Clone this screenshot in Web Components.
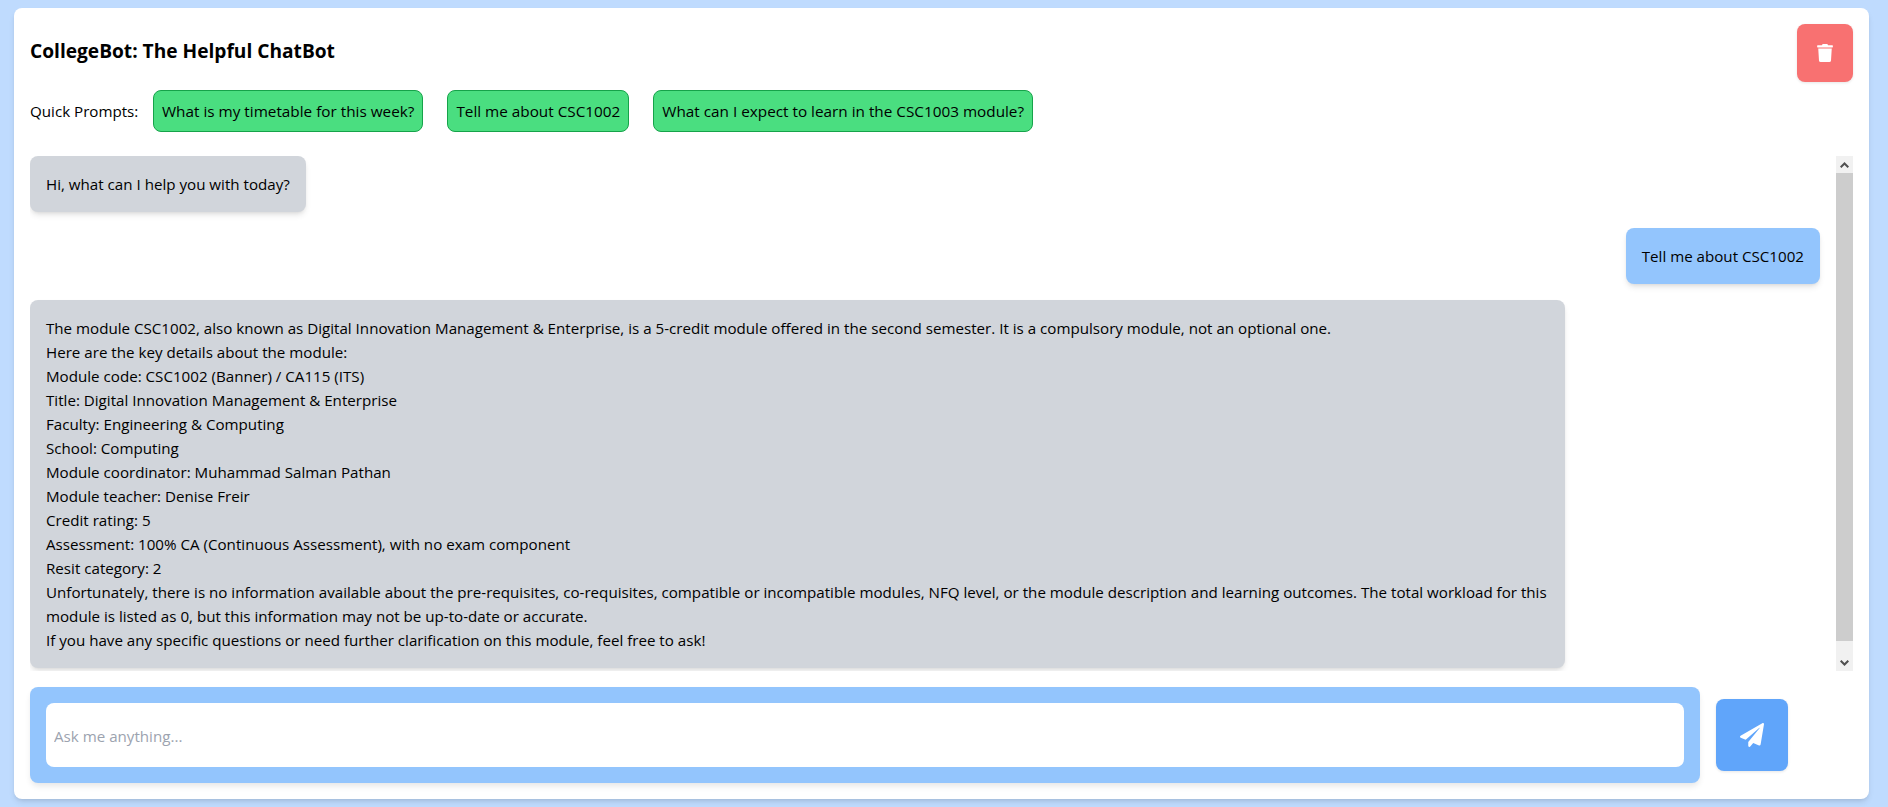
<!DOCTYPE html>
<html>
  <head>
    <meta charset="UTF-8" />
    <title>CollegeBot</title>
    <style>
      html, body { height: 100%; }
      body {
        margin: 0;
        background-color: #bfdbfe;
        font-family: "Open Sans", "Noto Sans", sans-serif;
        font-size: 15.15px;
        line-height: 24px;
        color: #000;
        overflow: hidden;
      }
    </style>
  </head>
  <body>
    <chat-app>
      <chat-header title-text="CollegeBot: The Helpful ChatBot"></chat-header>
      <prompt-row>
        <prompt-button>What is my timetable for this week?</prompt-button>
        <prompt-button>Tell me about CSC1002</prompt-button>
        <prompt-button>What can I expect to learn in the CSC1003 module?</prompt-button>
      </prompt-row>
      <chat-log>
        <chat-bubble>Hi, what can I help you with today?</chat-bubble>
        <chat-bubble from="user">Tell me about CSC1002</chat-bubble>
        <chat-bubble wide>The module CSC1002, also known as Digital Innovation Management &amp; Enterprise, is a 5-credit module offered in the second semester. It is a compulsory module, not an optional one.<br>Here are the key details about the module:<br>Module code: CSC1002 (Banner) / CA115 (ITS)<br>Title: Digital Innovation Management &amp; Enterprise<br>Faculty: Engineering &amp; Computing<br>School: Computing<br>Module coordinator: Muhammad Salman Pathan<br>Module teacher: Denise Freir<br>Credit rating: 5<br>Assessment: 100% CA (Continuous Assessment), with no exam component<br>Resit category: 2<br>Unfortunately, there is no information available about the pre-requisites, co-requisites, compatible or incompatible modules, NFQ level, or the module description and learning outcomes. The total workload for this<br>module is listed as 0, but this information may not be up-to-date or accurate.<br>If you have any specific questions or need further clarification on this module, feel free to ask!</chat-bubble>
      </chat-log>
      <chat-input></chat-input>
    </chat-app>

    <script>
      // Small helper, every element gets an open shadow root from a string
      const define = (name, html) => {
        const tpl = document.createElement("template");
        tpl.innerHTML = html;
        customElements.define(name, class extends HTMLElement {
          constructor() {
            super();
            this.attachShadow({ mode: "open" }).appendChild(tpl.content.cloneNode(true));
          }
        });
      };

      define("chat-app", `
        <style>
          :host {
            display: flex;
            flex-direction: column;
            box-sizing: border-box;
            width: 1855px;
            height: 791px;
            margin: 8px 0 0 14px;
            padding: 16px;
            background: #fff;
            border-radius: 8px;
            box-shadow: 0 4px 6px -1px rgba(0,0,0,.1), 0 2px 4px -2px rgba(0,0,0,.1);
          }
        </style>
        <slot></slot>
      `);

      class ChatHeader extends HTMLElement {
        constructor() {
          super();
          this.attachShadow({ mode: "open" }).innerHTML = `
            <style>
              :host { display: flex; justify-content: space-between; align-items: center; flex: none; }
              h1 { margin: 0 0 4px; font-size: 19.15px; line-height: 28px; font-weight: 700; }
              button {
                width: 56px; height: 58px; padding: 0; border: 0;
                display: flex; align-items: center; justify-content: center;
                background: #f87171; border-radius: 8px;
                box-shadow: 0 1px 3px rgba(0,0,0,.1);
              }
              svg { width: 16px; height: 18px; fill: #fff; display: block; }
            </style>
            <h1>${this.getAttribute("title-text")}</h1>
            <button aria-label="Clear chat">
              <svg viewBox="0 0 448 512"><path d="M432 32H312l-9.4-18.7A24 24 0 0 0 281.1 0H166.8a23.72 23.72 0 0 0-21.4 13.3L136 32H16A16 16 0 0 0 0 48v32a16 16 0 0 0 16 16h416a16 16 0 0 0 16-16V48a16 16 0 0 0-16-16zM53.2 467a48 48 0 0 0 47.9 45h245.8a48 48 0 0 0 47.9-45L416 128H32z"/></svg>
            </button>`;
        }
      }
      customElements.define("chat-header", ChatHeader);

      define("prompt-row", `
        <style>
          :host { display: flex; align-items: center; flex: none; margin-top: 8px; height: 42px; }
          span { width: 123px; flex: none; }
          div { display: flex; gap: 24px; }
        </style>
        <span>Quick Prompts:</span>
        <div><slot></slot></div>
      `);

      define("prompt-button", `
        <style>
          :host {
            display: block;
            box-sizing: border-box;
            height: 42px;
            padding: 8px;
            background: #4ade80;
            border: 1px solid #16a34a;
            border-radius: 8px;
            font-size: 15.3px;
            white-space: nowrap;
          }
        </style>
        <slot></slot>
      `);

      define("chat-log", `
        <style>
          :host { display: flex; flex: none; height: 515px; margin-top: 24px; }
          .messages {
            flex: 1;
            min-width: 0;
            box-sizing: border-box;
            padding-right: 16px;
            overflow: hidden;
            display: flex;
            flex-direction: column;
            gap: 16px;
          }
        </style>
        <div class="messages"><slot></slot></div>
        <log-scrollbar></log-scrollbar>
      `);

      // headless browser hides native scrollbars, so this one is drawn
      define("log-scrollbar", `
        <style>
          :host {
            display: flex;
            flex-direction: column;
            flex: none;
            width: 17px;
            background: #f1f1f1;
          }
          .arrow { height: 17px; flex: none; display: flex; align-items: center; justify-content: center; }
          .thumb { height: 468px; flex: none; background: #cdcdcd; }
          .spacer { flex: 1; }
          svg { width: 9px; height: 6px; display: block; fill: none; stroke: #505050; stroke-width: 2; }
        </style>
        <div class="arrow"><svg viewBox="0 0 9 6"><path d="M.7 5.3 4.5 1.5l3.8 3.8"/></svg></div>
        <div class="thumb"></div>
        <div class="spacer"></div>
        <div class="arrow"><svg viewBox="0 0 9 6"><path d="M.7.7l3.8 3.8L8.3.7"/></svg></div>
      `);

      define("chat-bubble", `
        <style>
          :host {
            display: block;
            flex: none;
            box-sizing: border-box;
            align-self: flex-start;
            padding: 16px;
            background: #d1d5db;
            border-radius: 8px;
            white-space: nowrap;
            box-shadow: 0 4px 6px -1px rgba(0,0,0,.1), 0 2px 4px -2px rgba(0,0,0,.1);
          }
          :host([from="user"]) { align-self: flex-end; background: #93c5fd; }
          :host([wide]) { width: 1535px; }
        </style>
        <slot></slot>
      `);

      define("chat-input", `
        <style>
          :host { display: flex; align-items: center; flex: none; margin-top: 16px; }
          .panel {
            box-sizing: border-box;
            width: 1670px; height: 96px;
            padding: 16px;
            background: #93c5fd;
            border-radius: 8px;
            box-shadow: 0 4px 6px -1px rgba(0,0,0,.1);
          }
          input {
            box-sizing: border-box;
            width: 100%; height: 64px;
            padding: 10px 8px 8px;
            border: 0; outline: 0;
            border-radius: 8px;
            background: #fff;
            font: inherit;
          }
          input::placeholder { color: #9ca3af; opacity: 1; }
          button {
            width: 72px; height: 72px; margin-left: 16px; padding: 0; border: 0;
            display: flex; align-items: center; justify-content: center;
            background: #60a5fa; border-radius: 8px;
            box-shadow: 0 1px 3px rgba(0,0,0,.1);
          }
          svg { width: 24px; height: 24px; fill: #fff; display: block; }
        </style>
        <div class="panel"><input type="text" placeholder="Ask me anything..."></div>
        <button aria-label="Send">
          <svg viewBox="0 0 512 512"><path d="M476 3.2L12.5 270.6c-18.1 10.4-15.8 35.6 2.2 43.2L121 358.4l287.3-253.2c5.5-4.9 13.3 2.6 8.6 8.3L176 407v80.5c0 23.6 28.5 32.9 42.5 15.8L282 426l124.6 52.2c14.2 6 30.4-2.9 33-18.2l72-432C515 7.8 493.3-6.8 476 3.2z"/></svg>
        </button>
      `);
    </script>
  </body>
</html>
